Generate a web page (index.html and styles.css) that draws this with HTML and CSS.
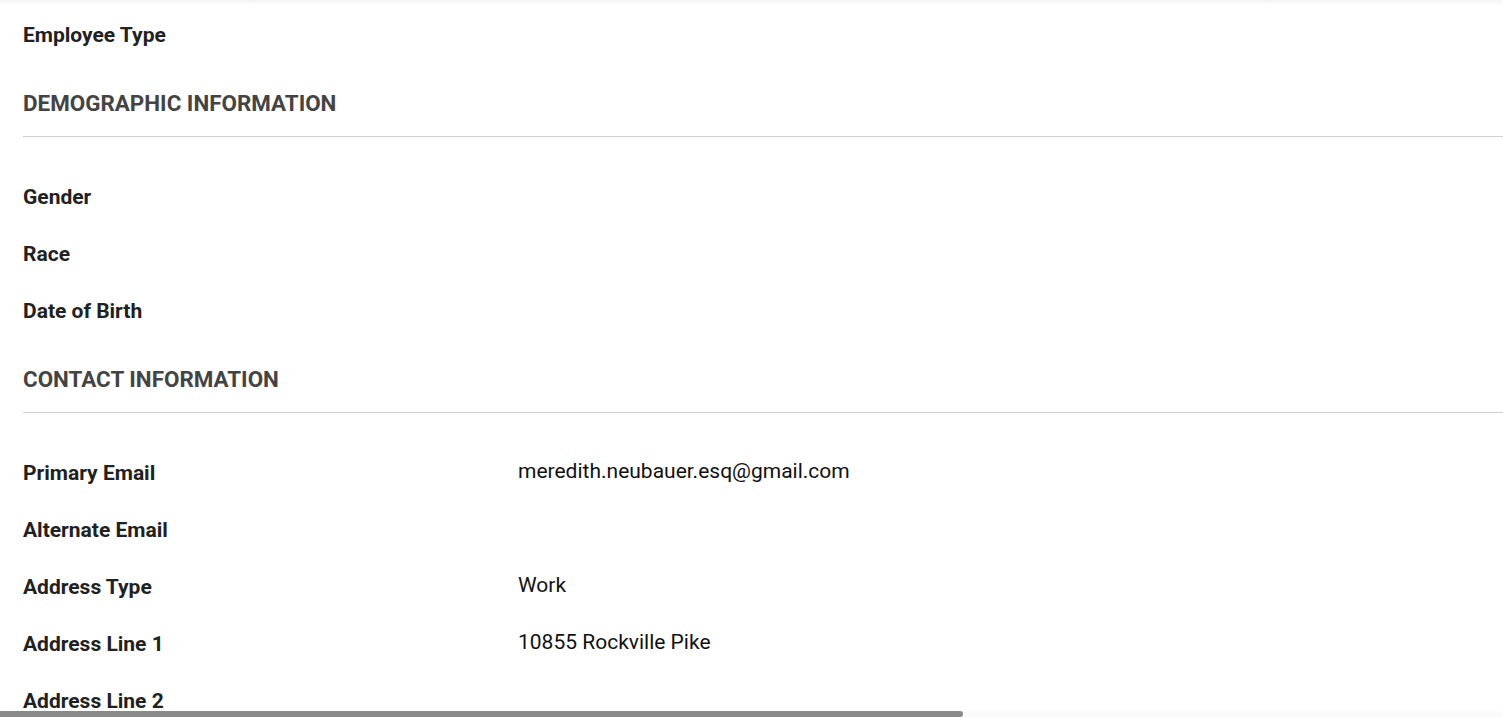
FILE: index.html
```html
<!DOCTYPE html>
<html lang="en">
<head>
    <meta charset="UTF-8">
    <meta name="viewport" content="width=device-width, initial-scale=1.0">
    <title>Employee Profile</title>
    <link rel="stylesheet" href="styles.css">
</head>
<body>

    <div class="top-shadow"></div>

    <div class="page">
        <div class="field-row">
            <div class="field-label">Employee Type</div>
            <div class="field-value"></div>
        </div>

        <!-- Demographic Section -->
        <div class="section-header">DEMOGRAPHIC INFORMATION</div>
        <div class="section-body">
            <div class="field-row">
                <div class="field-label">Gender</div>
                <div class="field-value"></div>
            </div>
            <div class="field-row">
                <div class="field-label">Race</div>
                <div class="field-value"></div>
            </div>
            <div class="field-row">
                <div class="field-label">Date of Birth</div>
                <div class="field-value"></div>
            </div>
        </div>

        <!-- Contact Section -->
        <div class="section-header">CONTACT INFORMATION</div>
        <div class="section-body">
            <div class="field-row">
                <div class="field-label">Primary Email</div>
                <div class="field-value">meredith.neubauer.esq@gmail.com</div>
            </div>
            <div class="field-row">
                <div class="field-label">Alternate Email</div>
                <div class="field-value"></div>
            </div>
            <div class="field-row">
                <div class="field-label">Address Type</div>
                <div class="field-value">Work</div>
            </div>
            <div class="field-row">
                <div class="field-label">Address Line 1</div>
                <div class="field-value">10855 Rockville Pike</div>
            </div>
            <div class="field-row">
                <div class="field-label">Address Line 2</div>
                <div class="field-value"></div>
            </div>
        </div>
    </div>

    <div class="h-scrollbar">
        <div class="h-scrollbar-thumb"></div>
    </div>

</body>
</html>
```

FILE: styles.css
```css
html, body {
    margin: 0;
    height: 717px;
    overflow: hidden;
}
body {
    font-family: Roboto, "Liberation Sans", sans-serif;
    color: #212121;
    background-color: white;
    position: relative;
}
.top-shadow {
    height: 5px;
    background: linear-gradient(#f3f3f3, #ffffff);
    position: absolute;
    top: 0;
    left: 0;
    right: 0;
}
.page {
    padding: 6px 0 0 23px;
}
.field-row {
    display: grid;
    grid-template-columns: 495px 1fr;
    align-items: center;
    height: 57px;
}
.field-label {
    font-size: 21px;
    font-weight: 700;
    color: #212121;
}
.field-value {
    font-size: 21px;
    color: #111;
    margin-bottom: 4px;
}
.section-header {
    padding: 27px 0 19px 0;
    line-height: 27px;
    font-size: 22.4px;
    font-weight: 700;
    color: #444;
    border-bottom: 1px solid #cfcfcf;
}
.section-body {
    margin-top: 31px;
}
.h-scrollbar {
    position: absolute;
    left: 0;
    right: 0;
    bottom: 0;
    height: 6px;
    background-color: #fafafa;
}
.h-scrollbar-thumb {
    width: 963px;
    height: 100%;
    background-color: #8a8a8a;
    border-radius: 0 4px 4px 0;
}
```
